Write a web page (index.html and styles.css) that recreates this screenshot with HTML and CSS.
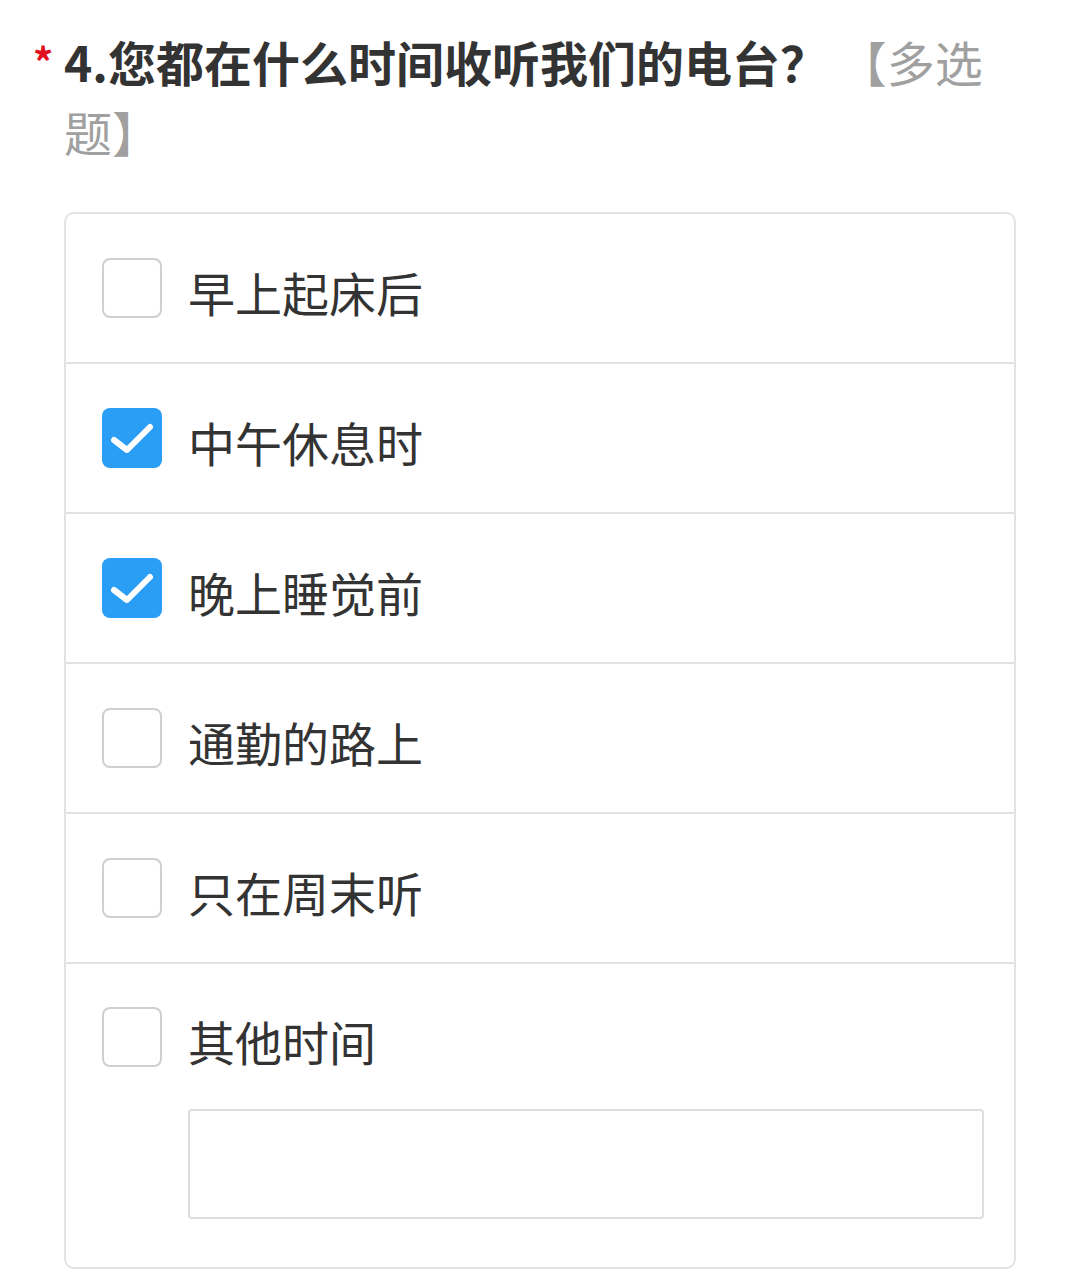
FILE: index.html
```html
<!DOCTYPE html>
<html lang="zh-CN">
<head>
<meta charset="utf-8">
<title>问卷</title>
<link rel="stylesheet" href="styles.css">
</head>
<body>
<div class="question">
  <div class="title">
    <span class="req">*</span>
    <h2 class="title-text">4.您都在什么时间收听我们的电台？ <span class="type">【多选题】</span></h2>
  </div>
  <div class="card">
    <div class="option"><span class="box"></span><span class="label">早上起床后</span></div>
    <div class="option"><span class="box checked"><svg viewBox="0 0 60 60" width="60" height="60"><path d="M12 32 L25 42 L48 19" fill="none" stroke="#fff" stroke-width="6" stroke-linecap="round" stroke-linejoin="round"/></svg></span><span class="label">中午休息时</span></div>
    <div class="option"><span class="box checked"><svg viewBox="0 0 60 60" width="60" height="60"><path d="M12 32 L25 42 L48 19" fill="none" stroke="#fff" stroke-width="6" stroke-linecap="round" stroke-linejoin="round"/></svg></span><span class="label">晚上睡觉前</span></div>
    <div class="option"><span class="box"></span><span class="label">通勤的路上</span></div>
    <div class="option"><span class="box"></span><span class="label">只在周末听</span></div>
    <div class="option other">
      <div class="other-line"><span class="box"></span><span class="label">其他时间</span></div>
      <div class="other-input"></div>
    </div>
  </div>
</div>
</body>
</html>
```

FILE: styles.css
```css
html, body {
  margin: 0;
  padding: 0;
  background: #ffffff;
}
body {
  font-family: "Noto Sans CJK SC", "Noto Sans", "Liberation Sans", sans-serif;
  color: #333333;
  width: 1080px;
}
.question {
  padding-top: 26px;
}
.title {
  display: flex;
  align-items: flex-start;
  padding-left: 33px;
  padding-right: 64px;
}
.req {
  width: 31px;
  flex: none;
  color: #e0101e;
  font-size: 40px;
  font-weight: 700;
  line-height: 70px;
  height: 70px;
}
.title-text {
  margin: 0;
  font-size: 48px;
  line-height: 70px;
  font-weight: 700;
  color: #333333;
}
.type {
  font-weight: 400;
  color: #a0a0a0;
}
.card {
  margin: 46px 0 0 64px;
  width: 952px;
  box-sizing: border-box;
  border: 2px solid #e3e3e3;
  border-radius: 10px;
  overflow: hidden;
}
.option {
  display: flex;
  align-items: center;
  height: 148px;
  padding-left: 36px;
  border-bottom: 2px solid #e3e3e3;
}
.option.other {
  display: block;
  height: auto;
  border-bottom: none;
  padding: 43px 30px 48px 36px;
}
.other-line {
  display: flex;
  align-items: center;
}
.box {
  flex: none;
  width: 60px;
  height: 60px;
  box-sizing: border-box;
  border: 2px solid #cfcfcf;
  border-radius: 8px;
  background: #ffffff;
  display: flex;
  align-items: center;
  justify-content: center;
}
.box.checked {
  background: #2a9df4;
  border: none;
}
.box svg {
  display: block;
}
.label {
  margin-left: 26px;
  font-size: 47px;
  line-height: 52px;
  color: #333333;
  padding-top: 8px;
}
.other-input {
  margin: 42px 0 0 86px;
  height: 110px;
  box-sizing: border-box;
  border: 2px solid #dedede;
  border-radius: 4px;
}
```
